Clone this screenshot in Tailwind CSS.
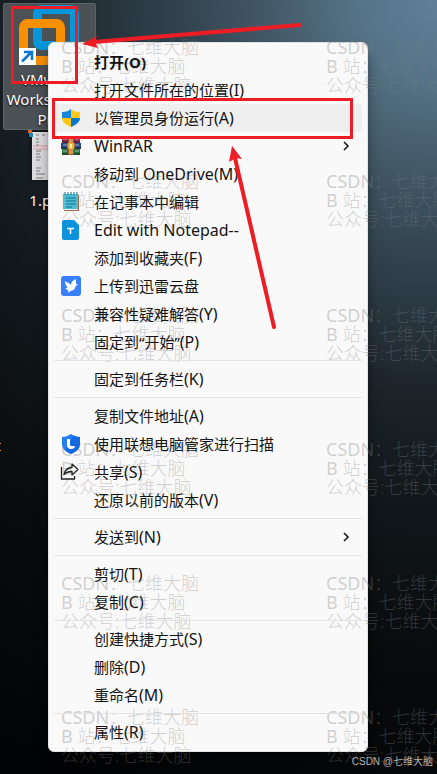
<!DOCTYPE html>
<html lang="zh-CN">
<head>
<meta charset="utf-8">
<meta name="viewport" content="width=device-width, initial-scale=1">
<title>桌面</title>
<script src="https://cdn.jsdelivr.net/npm/@tailwindcss/browser@4"></script>
</head>
<body class="min-h-screen bg-black font-['Noto_Sans','Noto_Sans_CJK_SC',sans-serif]">
<main class="relative min-h-screen overflow-hidden bg-[radial-gradient(circle_at_100%_0,#60809a_0px,#557387_80px,#3f5361_190px,#2d3c46_290px,#1c242a_390px,#11171b_500px,#090c0e_650px,#020304_860px)]">

  <!-- Desktop shortcuts -->
  <section aria-label="桌面图标" class="flex w-24 flex-col items-center pt-[3px] pl-[3px] text-[15px] leading-5 text-white">
    <button class="flex h-[127px] w-full flex-col items-center rounded-xs border border-white/10 bg-[#4b5155]">
      <svg class="block h-[63px] w-[63px] shrink-0" viewBox="0 0 63 63" aria-hidden="true">
        <rect x="19.500" y="5.500" width="37" height="36" rx="4" fill="none" stroke="#0796d8" stroke-width="9"/>
        <rect x="5.500" y="19.500" width="37" height="37" rx="4" fill="none" stroke="#f69000" stroke-width="9"/>
        <rect x="1" y="44" width="17" height="17" fill="#fff"/>
        <path d="M4 57.500 13 48.500M6 48h8v8" fill="none" stroke="#0878d4" stroke-width="2.500"/>
      </svg>
      <span class="pt-[2px] [text-shadow:0_1px_2px_#000]">VMware<br>Workstation<br>Pro</span>
    </button>
    <button class="flex w-full flex-col items-center">
      <svg class="block h-[60px] w-[48px]" viewBox="0 0 48 60" aria-hidden="true">
        <path d="M2 0h44v52H2z" fill="#15181b"/>
        <path d="M6 2h36v48H6z" fill="#dcdcde"/>
        <path d="M2 0h4v3H2z" fill="#d96a2a"/><path d="M3 3h4v4H3z" fill="#1d83b5"/>
        <path d="M10 5h3m3 0h3m3 0h3M10 9h3M10 12h3M10 15h3M10 21h5M10 24h4M10 27h5M10 30h4M10 38h5M10 41h4M10 44h9M10 48h7" stroke="#777" stroke-width="1"/>
        <path d="M7 16h23M7 19h23" stroke="#e5989b" stroke-width="1"/>
      </svg>
      <span class="[text-shadow:0_1px_2px_#000]">1.png</span>
    </button>
  </section>
  <i aria-hidden="true" class="absolute top-[443px] left-0 h-2 w-px border-y border-[#ef9830]"></i>

  <!-- Context menu -->
  <nav aria-label="右键菜单" class="absolute top-[42px] left-12 w-80 rounded-md border border-[#e2e4e5] bg-[#f9f9f9] px-[5px] py-[5px] shadow-lg shadow-black/50">
    <div class="relative z-20 flex flex-col text-[15px] leading-7 text-[#141414] *:[button]:flex *:[button]:h-7 *:[button]:items-center *:[button]:rounded *:[button]:pl-10 *:[button]:whitespace-nowrap *:[hr]:my-1 *:[hr]:border-[#e3e3e3] [&_[lang=en]]:text-base">
      <button class="font-bold">打开(O)</button>
      <button>打开文件所在的位置<span lang="en">(I)</span></button>
      <button class="relative bg-[#efefef]">
        <svg class="absolute left-[7px] h-5 w-5" viewBox="0 0 20 20" aria-hidden="true"><path d="M10 1C8 3 5 4 1 4v6h9z" fill="#1386d8"/><path d="M10 1c2 2 5 3 9 3v6h-9z" fill="#ffc61b"/><path d="M1 10h9v9c-5-2-9-5-9-9z" fill="#fac50c"/><path d="M10 10h9c0 4-4 7-9 9v-9z" fill="#0878cb"/></svg>
        以管理员身份运行<span lang="en">(A)</span>
      </button>
      <button class="relative">
        <svg class="absolute left-[7px] h-5 w-5" viewBox="0 0 20 20" aria-hidden="true"><path d="M1 2h18v5H1z" fill="#982653"/><path d="M0 7h20v6H0z" fill="#28478d"/><path d="M1 13h18v6H1z" fill="#27773b"/><path d="M1 6h18M0 12h20M1 18h18" stroke="#222" stroke-width="1"/><path d="M2 3h4M2 9h4M2 15h4M14 3h4M14 9h4M14 15h4" stroke="#a8b0b7" stroke-width="1"/><path d="M7 1h6v18H7z" fill="#9b562d"/><path d="M8 1h4v7H8zM8 13h4v5H8z" fill="#d89550"/><rect x="6.500" y="7" width="7" height="6" rx="1" fill="#efb32d"/><path d="M9 8h2v4H9z" fill="#fff0bd"/></svg>
        <span lang="en">WinRAR</span>
        <svg class="mr-3 ml-auto h-3 w-2" viewBox="0 0 8 12" fill="none" stroke="#111" stroke-width="1.500" aria-hidden="true"><path d="m2 2 4 4-4 4"/></svg>
      </button>
      <button><span>移动到 <span lang="en">OneDrive(M)</span></span></button>
      <button class="relative">
        <svg class="absolute left-[7px] h-5 w-5" viewBox="0 0 20 20" aria-hidden="true"><path d="M2 2h15v16H2z" fill="#4fbdd1"/><path d="M17 3h1v16H3v-1h14z" fill="#9b6a51"/><path d="M2 17h15v1H2z" fill="#e9eef0"/><path d="M4 0v3m3-3v3m3-3v3m3-3v3m3-3v3" stroke="#176f8e" stroke-width="1"/><path d="M5 6h10M5 9h10M5 12h10M5 15h6" stroke="#176f92" stroke-width="1.200"/></svg>
        在记事本中编辑
      </button>
      <button class="relative">
        <svg class="absolute left-[7px] h-5 w-5" viewBox="0 0 20 20" aria-hidden="true"><path d="M3 0h10l5 5v13q0 2-2 2H3q-2 0-2-2V2q0-2 2-2z" fill="#0d93dc"/><path d="M6 8.500h7M9.500 8v6" stroke="#fff" stroke-width="1.500"/></svg>
        <span lang="en">Edit with Notepad--</span>
      </button>
      <button>添加到收藏夹<span lang="en">(F)</span></button>
      <button class="relative">
        <svg class="absolute left-[7px] h-5 w-5" viewBox="0 0 20 20" aria-hidden="true"><rect width="20" height="20" rx="3" fill="#387ffb"/><path d="M4 5c2 2 4 1.500 6 4 0-3 2-5 5-6-.500 2 .500 3 0 5l2 0-2.500 2.500c-.500 3-2.500 4-5 4.500L7 17l.500-2.500c-1.500-.500-2.500-1.500-3-2.500l2.500-.500C5 10 4 8 4 5z" fill="#fff"/></svg>
        上传到迅雷云盘
      </button>
      <button>兼容性疑难解答<span lang="en">(Y)</span></button>
      <button>固定到“开始”<span lang="en">(P)</span></button>
      <hr>
      <button>固定到任务栏<span lang="en">(K)</span></button>
      <hr>
      <button>复制文件地址<span lang="en">(A)</span></button>
      <button class="relative">
        <svg class="absolute left-[7px] h-5 w-5" viewBox="0 0 20 20" aria-hidden="true"><path d="M10 0C7 2 4 3 1 3v7c0 5 4 8 9 10 5-2 9-5 9-10V3c-3 0-6-1-9-3z" fill="#247df2"/><path d="M10 20c5-2 9-5 9-10V3c-2 0-4-.500-6-1.500L4 16c2 2 4 3 6 4z" fill="#0754cf" opacity=".5"/><path d="M6 5h3v6q0 1 2 1h3q0 3-4 3-4 0-4-4z" fill="#fff"/></svg>
        使用联想电脑管家进行扫描
      </button>
      <button class="relative">
        <svg class="absolute left-[6px] h-5 w-5" viewBox="0 0 20 20" fill="none" stroke="#222" stroke-width="1.300" aria-hidden="true"><path d="M1.500 5v12h13v-3"/><path d="M12 2v3.500c-5 0-7 3-8 7 2-2 4-3 8-3V13l6-5.500z" stroke-linejoin="round"/></svg>
        共享<span lang="en">(S)</span>
      </button>
      <button>还原以前的版本<span lang="en">(V)</span></button>
      <hr>
      <button>发送到<span lang="en">(N)</span>
        <svg class="mr-3 ml-auto h-3 w-2" viewBox="0 0 8 12" fill="none" stroke="#111" stroke-width="1.500" aria-hidden="true"><path d="m2 2 4 4-4 4"/></svg>
      </button>
      <hr>
      <button>剪切<span lang="en">(T)</span></button>
      <button>复制<span lang="en">(C)</span></button>
      <hr>
      <button>创建快捷方式<span lang="en">(S)</span></button>
      <button>删除<span lang="en">(D)</span></button>
      <button>重命名<span lang="en">(M)</span></button>
      <hr>
      <button>属性<span lang="en">(R)</span></button>
    </div>
  </nav>

  <!-- Repeating watermark -->
  <div class="pointer-events-none absolute top-[38px] left-[61px] z-10 grid grid-cols-[265px_265px] gap-y-[77px] text-lg leading-[19px] font-light whitespace-nowrap text-[#808080]/35 [&_span]:font-normal">
    <p><span>CSDN</span>：七维大脑<br><span>B </span>站：七维大脑<br>公众号:七维大脑</p><p><span>CSDN</span>：七维大脑<br><span>B </span>站：七维大脑<br>公众号:七维大脑</p>
    <p><span>CSDN</span>：七维大脑<br><span>B </span>站：七维大脑<br>公众号:七维大脑</p><p><span>CSDN</span>：七维大脑<br><span>B </span>站：七维大脑<br>公众号:七维大脑</p>
    <p><span>CSDN</span>：七维大脑<br><span>B </span>站：七维大脑<br>公众号:七维大脑</p><p><span>CSDN</span>：七维大脑<br><span>B </span>站：七维大脑<br>公众号:七维大脑</p>
    <p><span>CSDN</span>：七维大脑<br><span>B </span>站：七维大脑<br>公众号:七维大脑</p><p><span>CSDN</span>：七维大脑<br><span>B </span>站：七维大脑<br>公众号:七维大脑</p>
    <p><span>CSDN</span>：七维大脑<br><span>B </span>站：七维大脑<br>公众号:七维大脑</p><p><span>CSDN</span>：七维大脑<br><span>B </span>站：七维大脑<br>公众号:七维大脑</p>
    <p><span>CSDN</span>：七维大脑<br><span>B </span>站：七维大脑<br>公众号:七维大脑</p><p><span>CSDN</span>：七维大脑<br><span>B </span>站：七维大脑<br>公众号:七维大脑</p>
  </div>

  <!-- Red callouts -->
  <svg class="pointer-events-none absolute top-0 left-0 z-30 h-[340px] w-[437px]" viewBox="0 0 437 340" fill="none" stroke="#ee1c25" aria-hidden="true">
    <path d="M12.500 7.500h64v75h-64zM53.500 99.500h298v38h-298z" stroke-width="3"/>
    <path d="M300 25 94 42M274 327 235 158" stroke-width="4" stroke-linecap="round"/>
    <path d="m82 44 15-8-2 6 3 6zM232 146l10 13-6-1-7 4z" fill="#ee1c25" stroke="none"/>
  </svg>
  <small class="absolute right-1 bottom-1 text-[10px] leading-4 text-[#b5b5b5] font-['Liberation_Sans','Noto_Sans_CJK_SC',sans-serif]">CSDN @七维大脑</small>
</main>
</body>
</html>
